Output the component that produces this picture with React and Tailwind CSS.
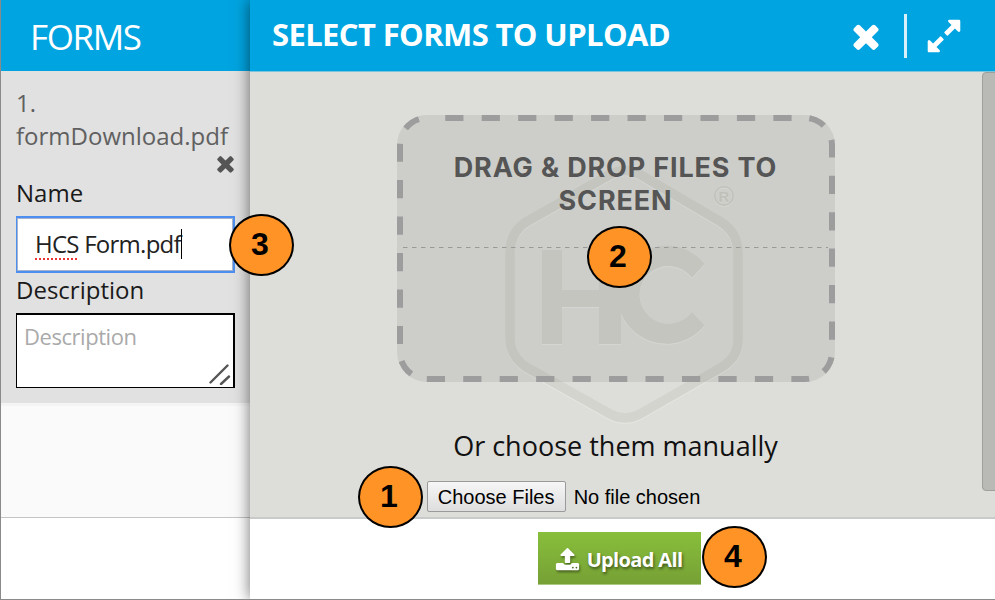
import React from "react";

const TIMES =
  "M1490 1322q0 40-28 68l-136 136q-28 28-68 28t-68-28l-294-294-294 294q-28 28-68 28t-68-28l-136-136q-28-28-28-68t28-68l294-294-294-294q-28-28-28-68t28-68l136-136q28-28 68-28t68 28l294 294 294-294q28-28 68-28t68 28l136 136q28 28 28 68t-28 68l-294 294 294 294q28 28 28 68z";
const EXPAND =
  "M883 1056q0 13-10 23l-332 332 144 144q19 19 19 45t-19 45-45 19h-448q-26 0-45-19t-19-45v-448q0-26 19-45t45-19 45 19l144 144 332-332q10-10 23-10t23 10l114 114q10 10 10 23zm781-864v448q0 26-19 45t-45 19-45-19l-144-144-332 332q-10 10-23 10t-23-10l-114-114q-10-10-10-23t10-23l332-332-144-144q-19-19-19-45t19-45 45-19h448q26 0 45 19t19 45z";
const UPLOAD =
  "M1344 1472q0-26-19-45t-45-19-45 19-19 45 19 45 45 19 45-19 19-45zm256 0q0-26-19-45t-45-19-45 19-19 45 19 45 45 19 45-19 19-45zm128-224v320q0 40-28 68t-68 28h-1472q-40 0-68-28t-28-68v-320q0-40 28-68t68-28h427q21 56 70.500 92t110.500 36h256q61 0 110.500-36t70.500-92h427q40 0 68 28t28 68zm-325-648q-17 40-59 40h-256v448q0 26-19 45t-45 19h-256q-26 0-45-19t-19-45v-448h-256q-42 0-59-40-17-39 14-69l448-448q18-19 45-19t45 19l448 448q31 30 14 69z";

function Icon({ d, className }) {
  return (
    <svg viewBox="0 0 1792 1792" fill="currentColor" className={className}>
      <path d={d} />
    </svg>
  );
}

function Badge({ n, className }) {
  return (
    <div
      className={`absolute z-20 flex items-center justify-center rounded-[50%] border-2 border-black bg-[#ff9326] pr-[3px] pb-[3px] font-['Liberation_Sans',Arial,sans-serif] text-[32px] leading-none font-bold text-black ${className}`}
    >
      {n}
    </div>
  );
}

function Watermark() {
  return (
    <svg
      viewBox="500 160 250 268"
      className="absolute top-[88px] left-[249px] h-[268px] w-[250px] [filter:drop-shadow(0_1px_0_#e6e7e3)]"
    >
      <path
        d="M511 253Q511 233 527 222L612 174Q626 167 640 174L722 222Q739 233 739 253V340Q739 357 723 367L641 414Q626 422 611 414L527 367Q511 356 511 338Z"
        fill="none"
        stroke="#d3d4cd"
        strokeWidth="9.500"
      />
      <path d="M543 250h20v40h37v-40h22v94h-22v-37h-37v37h-20z" fill="#d3d4cd" />
      <path
        d="M705.500 264A49 49 0 1 0 705.500 325.500L693 312A29 29 0 1 1 693 278Z"
        fill="#d3d4cd"
      />
      <circle cx="725" cy="196" r="9.200" fill="none" stroke="#cfd0c8" strokeWidth="1.600" />
      <text
        x="725"
        y="201.500"
        textAnchor="middle"
        fill="#cfd0c8"
        className="font-['Liberation_Sans',Arial,sans-serif] text-[15px] font-bold"
      >
        R
      </text>
    </svg>
  );
}

function Sidebar() {
  return (
    <aside className="flex w-[250px] shrink-0 flex-col border-l border-[#8a8a8a] bg-white">
      <header className="flex h-[71px] items-center bg-[#00a4e0] pt-[2px] pl-[29px] text-[35px] leading-none text-white">
        <span className="tracking-[-1.4px]">FORMS</span>
      </header>
      <section className="flex h-[332px] flex-col bg-[#e1e1e1] pt-[15px] pr-[15px] pl-[15px] text-[24px] leading-[33px]">
        <p className="text-[#606060]">
          1.
          <br />
          formDownload.pdf
        </p>
        <div className="flex h-[24px] items-center justify-end pb-[2px]">
          <Icon d={TIMES} className="-mr-[3px] h-[25px] w-[25px] text-[#555]" />
        </div>
        <label className="leading-[33px] text-[#1a1a1a]">Name</label>
        <div className="mt-[7px] flex h-[57px] items-center border-2 border-l-1 border-[#4d8ff0] bg-white pb-[2px] pl-[18px] tracking-[-0.75px] text-[#222] shadow-[inset_0_0_0_1px_#a5b4cc]">
          <span className="underline decoration-[#e33] decoration-dotted decoration-2 underline-offset-[5px]">
            HCS
          </span>
          <span className="whitespace-pre"> Form.pdf</span>
          <span className="h-[30px] w-[1.500px] bg-black" />
        </div>
        <label className="leading-[33px] text-[#1a1a1a]">Description</label>
        <div className="relative mt-[7px] h-[75px] border-2 border-b-1 border-l-1 border-black bg-white pt-[5px] pl-[7px] text-[22px] leading-[33px] tracking-[-0.45px] text-[#aaa]">
          Description
          <svg
            viewBox="0 0 22 22"
            className="absolute right-[2px] bottom-[2px] h-[22px] w-[22px]"
            fill="none"
            stroke="#555"
            strokeWidth="2.400"
            strokeLinecap="round"
          >
            <path d="M1.500 19.500L18.500 2.500M12 21L20 13.500" />
          </svg>
        </div>
      </section>
      <div className="h-[115px] border-t-3 border-b border-t-[#f4f4f4] border-b-[#c4c4c4] bg-[#fafafa]" />
      <div className="flex-1 bg-white" />
    </aside>
  );
}

function DropZone() {
  return (
    <div className="relative mt-[43px] ml-[-14px] h-[267px] w-[438px] overflow-hidden rounded-[30px] bg-black/7">
      <svg viewBox="0 0 438 267" className="absolute inset-0 h-full w-full">
        <rect
          width="438"
          height="267"
          rx="30"
          fill="none"
          stroke="#9d9d9d"
          strokeWidth="12"
          strokeDasharray="18.230"
          strokeDashoffset="18.230"
        />
        <path d="M6 132.500H431" stroke="#999" strokeDasharray="4.500 4.500" />
      </svg>
      <h2 className="pt-[36px] text-center font-[Inter,sans-serif] text-[27px] leading-[33px] font-bold tracking-[0.85px] text-[#555]">
        DRAG &amp; DROP FILES TO
        <br />
        SCREEN
      </h2>
    </div>
  );
}

export default function App() {
  return (
    <div className="relative flex h-[600px] w-[995px] overflow-hidden border-b border-[#8a8a8a] bg-white font-['Open_Sans',sans-serif]">
      <Sidebar />
      <main className="relative z-10 flex min-w-0 flex-1 flex-col bg-white shadow-[-1px_0_14px_rgba(0,0,0,0.5)]">
        <header className="flex h-[72px] shrink-0 items-center border-b border-[#7cc4de] bg-[#00a4e0] pl-[22px] text-white">
          <h1 className="flex-1 pb-[3px] text-[31px] leading-none font-bold tracking-[-0.62px]">
            SELECT FORMS TO UPLOAD
          </h1>
          <Icon d={TIMES} className="h-[38px] w-[38px]" />
          <span className="ml-[19px] h-[44px] w-[3px] bg-[#d8f0fa]" />
          <Icon d={EXPAND} className="mr-[32px] ml-[18px] h-[38px] w-[38px]" />
        </header>
        <section className="relative flex h-[447px] shrink-0 flex-col items-center border-b-2 border-[#c9cbcb] bg-[#dddeda]">
          <Watermark />
          <DropZone />
          <p className="relative mt-[44px] ml-[-14px] text-[27px] leading-[40px] text-[#111]">
            Or choose them manually
          </p>
          <div className="mt-[15px] ml-[-118px] flex items-center font-['Liberation_Sans',Arial,sans-serif] text-[20px] text-black">
            <button className="h-[31px] w-[139px] rounded-[2px] border border-[#9a9a9a] bg-linear-to-b from-[#f6f6f6] to-[#dedede] leading-none whitespace-nowrap">
              Choose Files
            </button>
            <span className="ml-[8px]">No file chosen</span>
          </div>
          <div className="absolute top-0 right-[-4px] h-[419px] w-[17px] rounded-[4px] border border-[#9fa09c] bg-[#b9bab5]" />
        </section>
        <footer className="flex flex-1 pt-[13px] pl-[288px]">
          <button className="flex h-[53px] w-[163px] items-center justify-center gap-[7px] border-b border-[#a9c983] bg-linear-to-b from-[#88bf3b] to-[#76a035] pt-[3px] pr-[2px] text-[20px] font-bold tracking-[-0.65px] text-white [text-shadow:1px_2px_3px_rgba(0,0,0,0.5)]">
            <Icon
              d={UPLOAD}
              className="h-[25px] w-[25px] [filter:drop-shadow(1px_2px_1px_rgba(0,0,0,0.4))]"
            />
            Upload All
          </button>
        </footer>
      </main>
      <Badge n="1" className="top-[466px] left-[358px] h-[62px] w-[65px]" />
      <Badge n="2" className="top-[226px] left-[587px] h-[62px] w-[65px]" />
      <Badge n="3" className="top-[214px] left-[229px] h-[62px] w-[65px]" />
      <Badge n="4" className="top-[526px] left-[702px] h-[62px] w-[65px]" />
    </div>
  );
}
